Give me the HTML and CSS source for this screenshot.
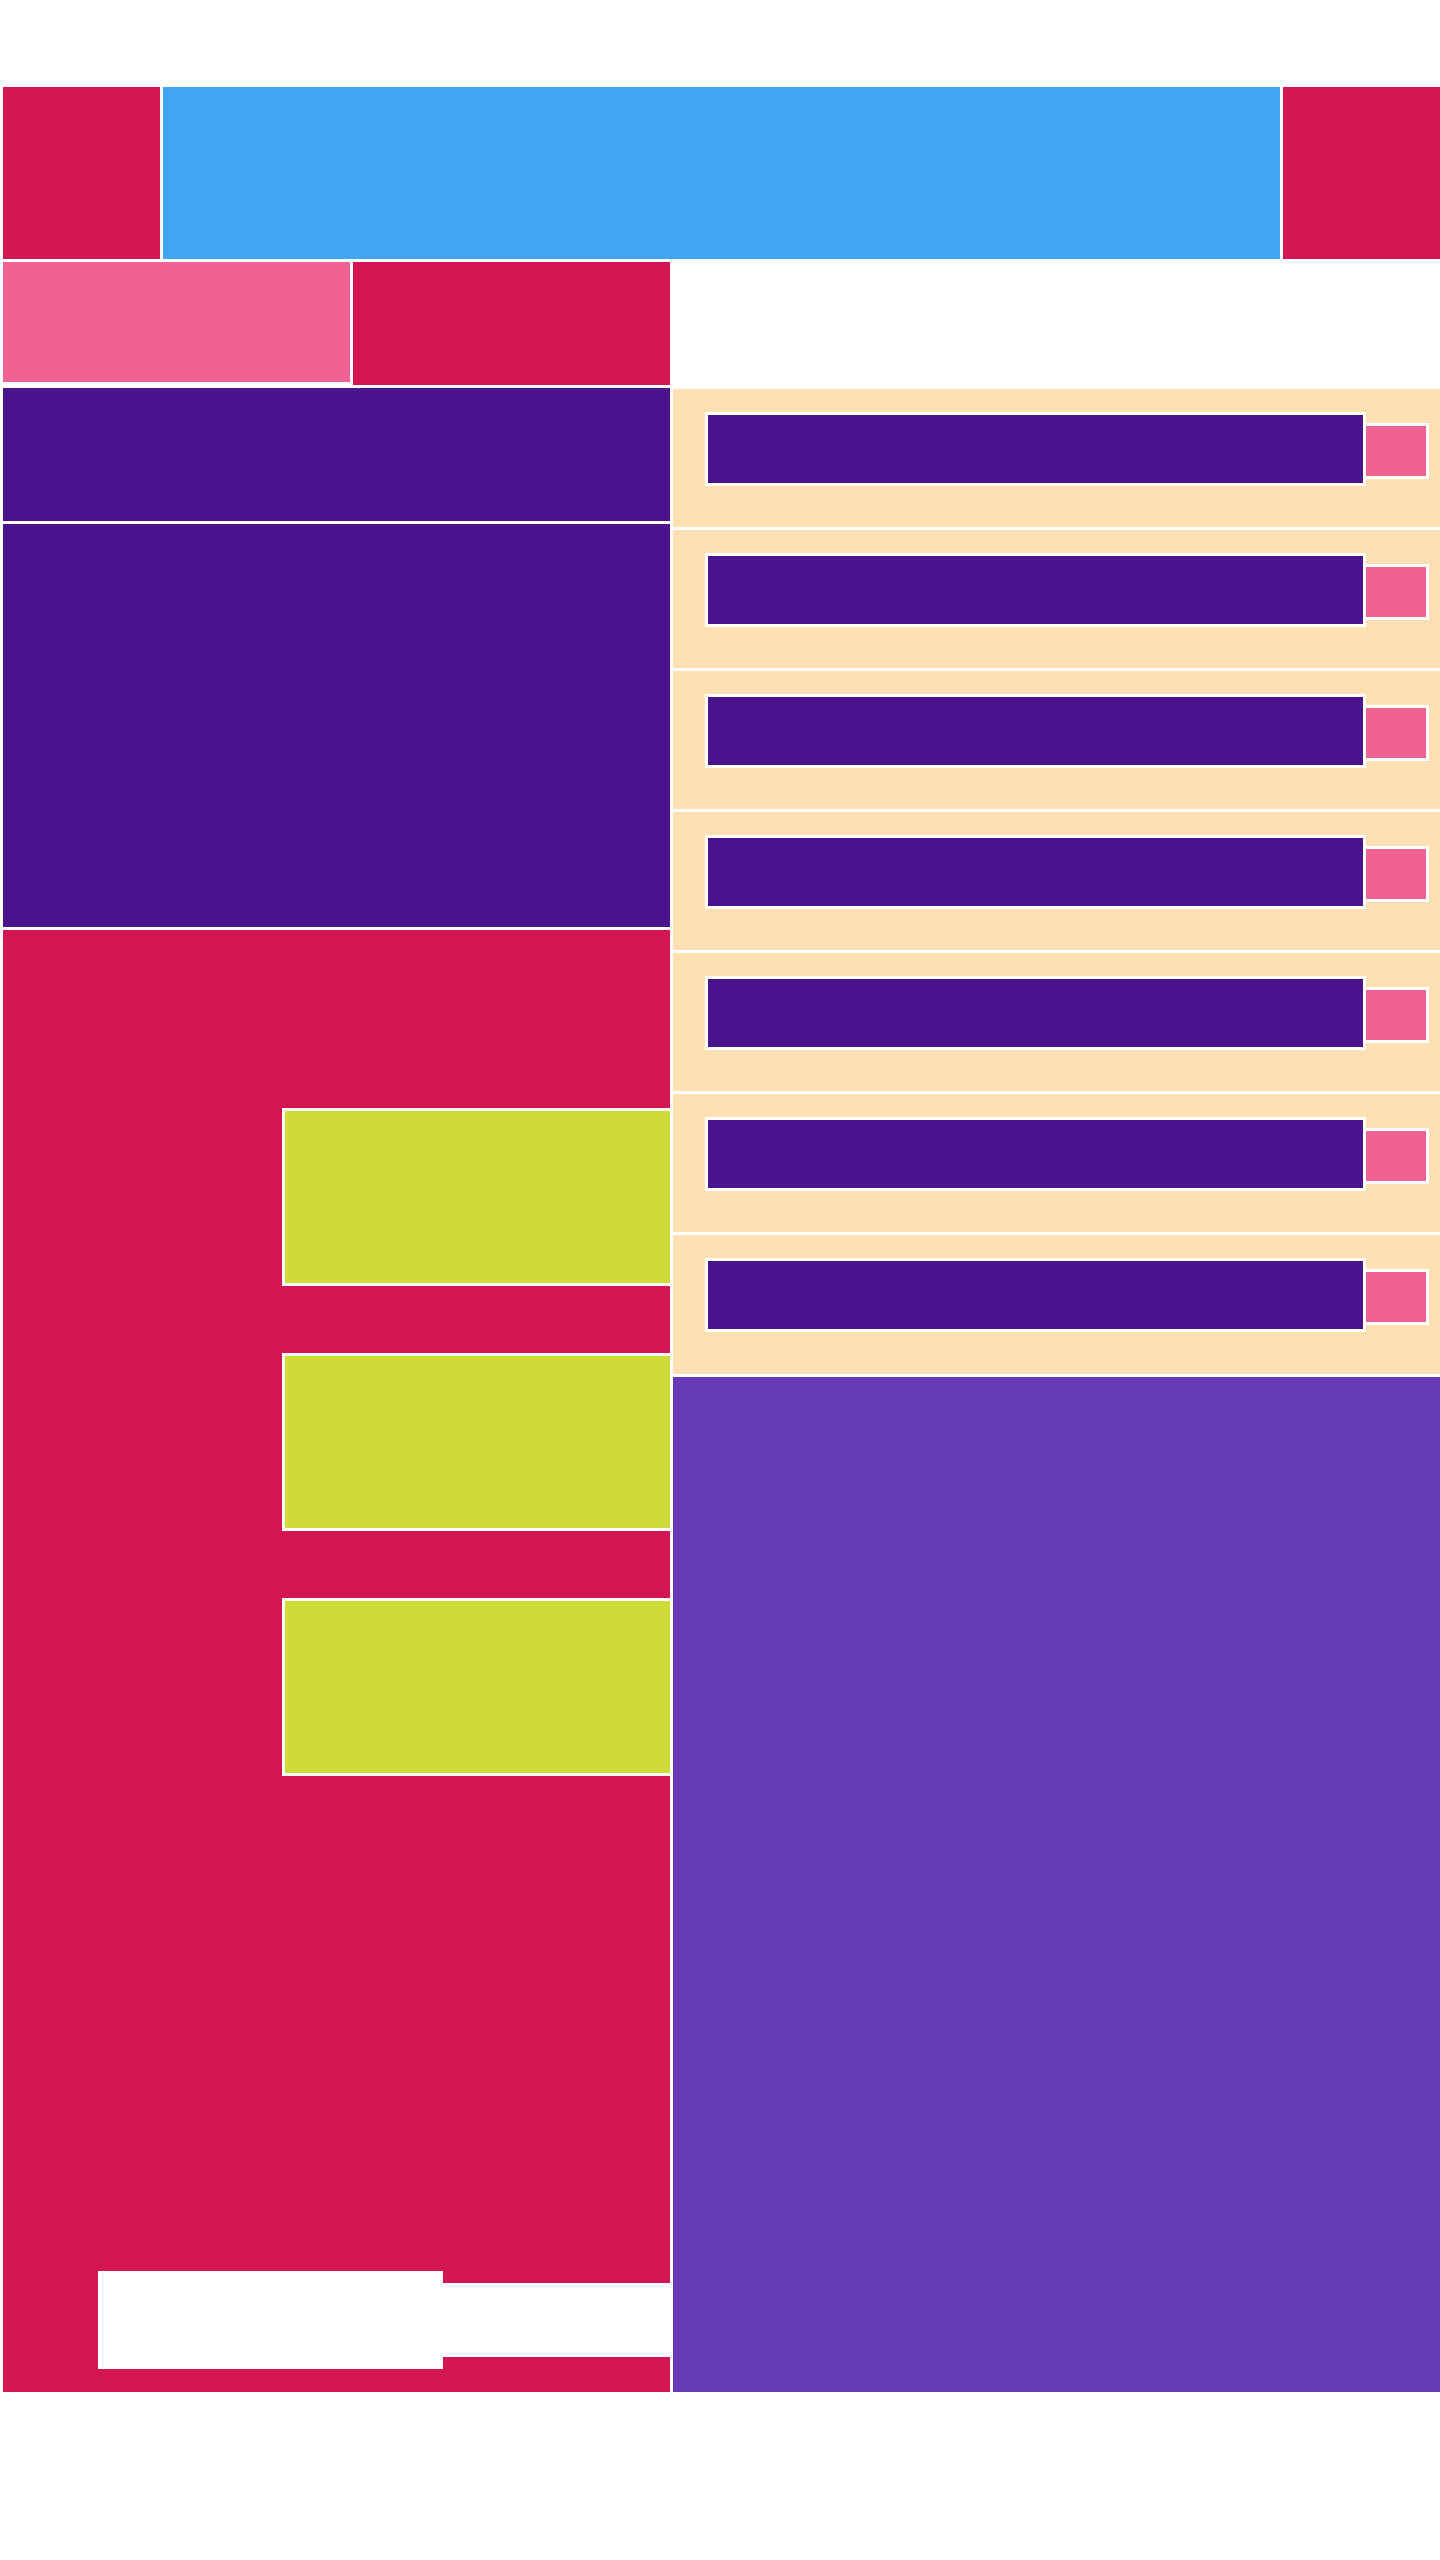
FILE: index.html
```html
<!DOCTYPE html>
<html lang="en">
<head>
<meta charset="utf-8">
<title>Blocks</title>
<link rel="stylesheet" href="styles.css">
</head>
<body>
<div class="page">
  <header class="header">
    <div class="hd-side"></div>
    <div class="hd-main"></div>
    <div class="hd-side"></div>
  </header>
  <main class="main">
    <section class="left">
      <div class="tabs">
        <div class="tab-pink"></div>
        <div class="tab-red"></div>
      </div>
      <div class="purple-band"></div>
      <div class="purple-block"></div>
      <div class="red-block">
        <div class="lime"></div>
        <div class="lime"></div>
        <div class="lime"></div>
        <div class="foot">
          <div class="foot-a"></div>
          <div class="foot-b"></div>
        </div>
      </div>
    </section>
    <section class="right">
      <div class="row"><div class="bar"></div><div class="chip"></div></div>
      <div class="row"><div class="bar"></div><div class="chip"></div></div>
      <div class="row"><div class="bar"></div><div class="chip"></div></div>
      <div class="row"><div class="bar"></div><div class="chip"></div></div>
      <div class="row"><div class="bar"></div><div class="chip"></div></div>
      <div class="row"><div class="bar"></div><div class="chip"></div></div>
      <div class="row row-last"><div class="bar"></div><div class="chip"></div></div>
      <div class="violet"></div>
    </section>
  </main>
</div>
</body>
</html>
```

FILE: styles.css
```css
html, body {
  margin: 0;
  padding: 0;
  background: #ffffff;
}

.page {
  padding: 87px 0 0 3px;
  display: flex;
  flex-direction: column;
  gap: 3px;
}

.header {
  display: flex;
  gap: 3px;
  height: 172px;
}

.hd-side {
  width: 157px;
  background: #d31651;
}

.hd-main {
  flex: 1;
  background: #42a5f5;
}

.main {
  display: flex;
  gap: 3px;
  align-items: flex-start;
}

.left {
  width: 667px;
  display: flex;
  flex-direction: column;
  gap: 3px;
}

.tabs {
  display: flex;
  gap: 3px;
  align-items: flex-start;
}

.tab-pink {
  width: 347px;
  height: 120px;
  background: #f06292;
}

.tab-red {
  width: 317px;
  height: 123px;
  background: #d31651;
}

.purple-band {
  height: 133px;
  background: #4a148c;
}

.purple-block {
  height: 403px;
  background: #4a148c;
}

.red-block {
  height: 1462px;
  background: #d31651;
  display: flex;
  flex-direction: column;
  align-items: flex-end;
  padding-top: 178px;
  box-sizing: border-box;
  gap: 67px;
}

.lime {
  width: 385px;
  height: 172px;
  background: #cddc39;
  border: 3px solid #ffffff;
  border-right: 0;
}

.foot {
  align-self: flex-start;
  margin-top: 428px;
  margin-left: 95px;
  display: flex;
  align-items: center;
}

.foot-a {
  width: 345px;
  height: 98px;
  background: #ffffff;
}

.foot-b {
  width: 227px;
  height: 74px;
  background: #ffffff;
}

.right {
  flex: 1;
  display: flex;
  flex-direction: column;
  gap: 3px;
  padding-top: 127px;
}

.row {
  height: 138px;
  background: #ffe0b2;
  display: flex;
  align-items: flex-start;
  padding: 23px 0 0 32px;
  box-sizing: border-box;
}

.row-last {
  height: 139px;
}

.bar {
  width: 655px;
  height: 68px;
  background: #4a148c;
  border: 3px solid #ffffff;
}

.chip {
  width: 60px;
  height: 50px;
  margin-top: 11px;
  background: #f06292;
  border: 3px solid #ffffff;
  border-left: 0;
}

.violet {
  height: 1015px;
  background: #673ab7;
}
```
